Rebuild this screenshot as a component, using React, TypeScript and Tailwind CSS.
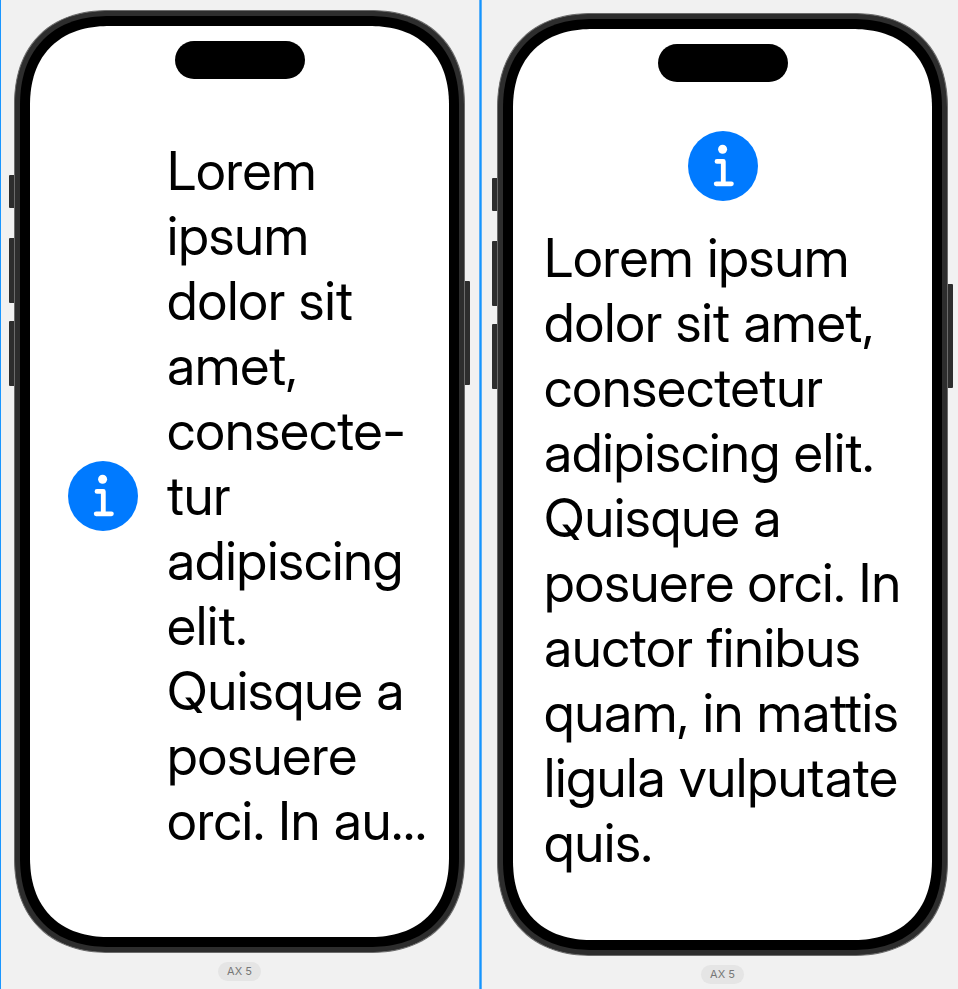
import type { ReactNode } from "react";

const truncatedLines = [
  "Lorem",
  "ipsum",
  "dolor sit",
  "amet,",
  "consecte-",
  "tur",
  "adipiscing",
  "elit.",
  "Quisque a",
  "posuere",
  "orci. In au…",
];

const fullLines = [
  "Lorem ipsum",
  "dolor sit amet,",
  "consectetur",
  "adipiscing elit.",
  "Quisque a",
  "posuere orci. In",
  "auctor finibus",
  "quam, in mattis",
  "ligula vulputate",
  "quis.",
];

function InfoIcon() {
  return (
    <svg viewBox="0 0 70 70" className="size-[70px] shrink-0" role="img" aria-label="Info">
      <circle cx="35" cy="35" r="35" fill="#007aff" />
      <circle cx="34.6" cy="18.2" r="4.5" fill="#fff" />
      <path
        d="M29 30.4h6.3v22.4M28.2 52.8h15.2"
        fill="none"
        stroke="#fff"
        strokeWidth="4.8"
        strokeLinecap="round"
        strokeLinejoin="round"
      />
    </svg>
  );
}

function BodyText({ lines }: { lines: string[] }) {
  return (
    <p className="font-['Inter_Display',Inter,sans-serif] text-[54px] leading-[65px] whitespace-nowrap text-black">
      {lines.map((line) => (
        <span key={line} className="block">
          {line}
        </span>
      ))}
    </p>
  );
}

function Phone({ children }: { children: ReactNode }) {
  return (
    <div className="relative aspect-[451/943] w-full">
      <span className="absolute top-[165px] -left-[5px] h-[33px] w-[6px] rounded-l-[1px] bg-[#2d2d2d]" />
      <span className="absolute top-[228px] -left-[5px] h-[65px] w-[6px] rounded-l-[1px] bg-[#2d2d2d]" />
      <span className="absolute top-[311px] -left-[5px] h-[65px] w-[6px] rounded-l-[1px] bg-[#2d2d2d]" />
      <span className="absolute top-[271px] -right-[5px] h-[104px] w-[6px] rounded-r-[1px] bg-[#2d2d2d]" />
      <div className="relative h-full rounded-[96px] border border-[#6b6b6b] bg-[#2d2d2d] p-[5px] [corner-shape:superellipse(1.2)]">
        <div className="h-full rounded-[90px] bg-black p-[10px] [corner-shape:superellipse(1.2)]">
          <div className="flex h-full flex-col rounded-[80px] bg-white [corner-shape:superellipse(1.2)]">
            <div className="mx-auto mt-[15px] h-[38px] w-[130px] shrink-0 rounded-full bg-black" />
            {children}
          </div>
        </div>
      </div>
    </div>
  );
}

function SizeLabel() {
  return (
    <span className="mt-[9px] rounded-full bg-[#e5e5e5] px-[9px] text-[11px] leading-[19px] text-[#777777]">
      AX 5
    </span>
  );
}

export default function App() {
  return (
    <main className="grid min-h-screen grid-cols-2 overflow-hidden bg-[#f1f1f1] font-[Inter,sans-serif]">
      <section className="flex flex-col items-center border-l border-[#1a96ff] pt-[10px] pr-[14px] pl-[13px]">
        <Phone>
          <div className="mt-[59px] flex items-center gap-[29px] pl-[38px]">
            <InfoIcon />
            <BodyText lines={truncatedLines} />
          </div>
        </Phone>
        <SizeLabel />
      </section>
      <section className="flex flex-col items-center border-l border-[#5ab0f8] pt-[13px] pr-[10px] pl-[17px] shadow-[inset_1px_0_#1495ff,inset_2px_0_#5ab0f8]">
        <Phone>
          <div className="mt-[49px] flex flex-col items-center gap-[24px] px-[31px]">
            <InfoIcon />
            <div className="self-stretch">
              <BodyText lines={fullLines} />
            </div>
          </div>
        </Phone>
        <SizeLabel />
      </section>
    </main>
  );
}
